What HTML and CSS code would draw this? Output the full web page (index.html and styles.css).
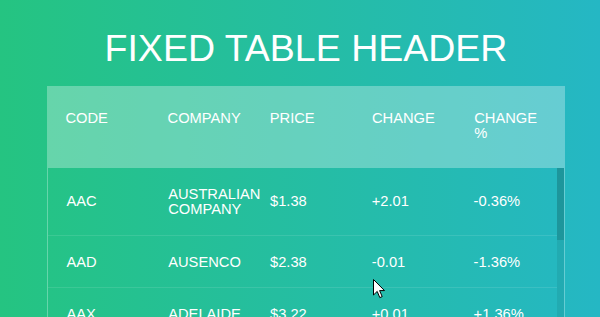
FILE: index.html
```
<!DOCTYPE html>
<html lang="en">
<head>
<meta charset="utf-8">
<title>Fixed Table Header</title>
<link rel="stylesheet" href="styles.css">
</head>
<body>
<section class="page">
  <h1 class="title">FIXED TABLE HEADER</h1>
  <div class="tbl">
    <div class="tbl-head">
      <div class="row head-row">
        <div class="cell">CODE</div>
        <div class="cell">COMPANY</div>
        <div class="cell">PRICE</div>
        <div class="cell">CHANGE</div>
        <div class="cell">CHANGE %</div>
      </div>
    </div>
    <div class="tbl-body">
      <div class="rows">
        <div class="row body-row"><div class="cell">AAC</div><div class="cell">AUSTRALIAN COMPANY</div><div class="cell">$1.38</div><div class="cell">+2.01</div><div class="cell">-0.36%</div></div>
        <div class="row body-row"><div class="cell">AAD</div><div class="cell">AUSENCO</div><div class="cell">$2.38</div><div class="cell">-0.01</div><div class="cell">-1.36%</div></div>
        <div class="row body-row"><div class="cell">AAX</div><div class="cell">ADELAIDE</div><div class="cell">$3.22</div><div class="cell">+0.01</div><div class="cell">+1.36%</div></div>
        <div class="row body-row"><div class="cell">XXD</div><div class="cell">ADITYA BIRLA</div><div class="cell">$1.02</div><div class="cell">-1.01</div><div class="cell">+2.36%</div></div>
        <div class="row body-row"><div class="cell">AAC</div><div class="cell">AUSTRALIAN COMPANY</div><div class="cell">$1.38</div><div class="cell">+2.01</div><div class="cell">-0.36%</div></div>
        <div class="row body-row"><div class="cell">AAD</div><div class="cell">AUSENCO</div><div class="cell">$2.38</div><div class="cell">-0.01</div><div class="cell">-1.36%</div></div>
      </div>
      <div class="track"><div class="thumb"></div></div>
    </div>
  </div>
</section>
<svg class="cursor" width="13" height="20" viewBox="0 0 13 20" aria-hidden="true">
  <path d="M0.5 0.5 L0.5 16 L4.2 12.4 L6.8 18.6 L9.2 17.6 L6.6 11.6 L11.5 11.6 Z" fill="#fff" stroke="#000" stroke-width="1" stroke-linejoin="miter"/>
</svg>
</body>
</html>
```
FILE: styles.css
```
html, body {
  margin: 0;
  height: 100%;
  overflow: hidden;
}

body {
  background: linear-gradient(to right, #25c481, #25b7c4);
  font-family: "Liberation Sans", Arial, sans-serif;
  color: #fff;
}

.page {
  padding: 26.5px 35px 0 47px;
}

.title {
  margin: 0 0 17.8px;
  font-size: 37.5px;
  line-height: 42px;
  font-weight: 300;
  text-align: center;
}

.tbl-head {
  background: rgba(255, 255, 255, 0.3);
  padding-right: 7px;
}

.row {
  display: grid;
  grid-template-columns: repeat(5, minmax(0, 1fr));
}

.cell {
  min-width: 0;
  font-size: 14.7px;
  line-height: 15px;
}

.head-row .cell {
  padding: 24.5px 18.4px 26px;
}

.tbl-body {
  display: flex;
  height: 367px;
  border: 1px solid rgba(255, 255, 255, 0.3);
}

.rows {
  flex: 1;
  min-width: 0;
  overflow: hidden;
}

.body-row {
  align-items: center;
  border-bottom: 1px solid rgba(255, 255, 255, 0.1);
}

.body-row .cell {
  padding: 19px 18.4px 17.8px;
}

.track {
  width: 7px;
  background: rgba(0, 0, 0, 0.07);
}

.thumb {
  height: 72px;
  background: rgba(0, 0, 0, 0.12);
}

.cursor {
  position: absolute;
  left: 373px;
  top: 279px;
}
```
